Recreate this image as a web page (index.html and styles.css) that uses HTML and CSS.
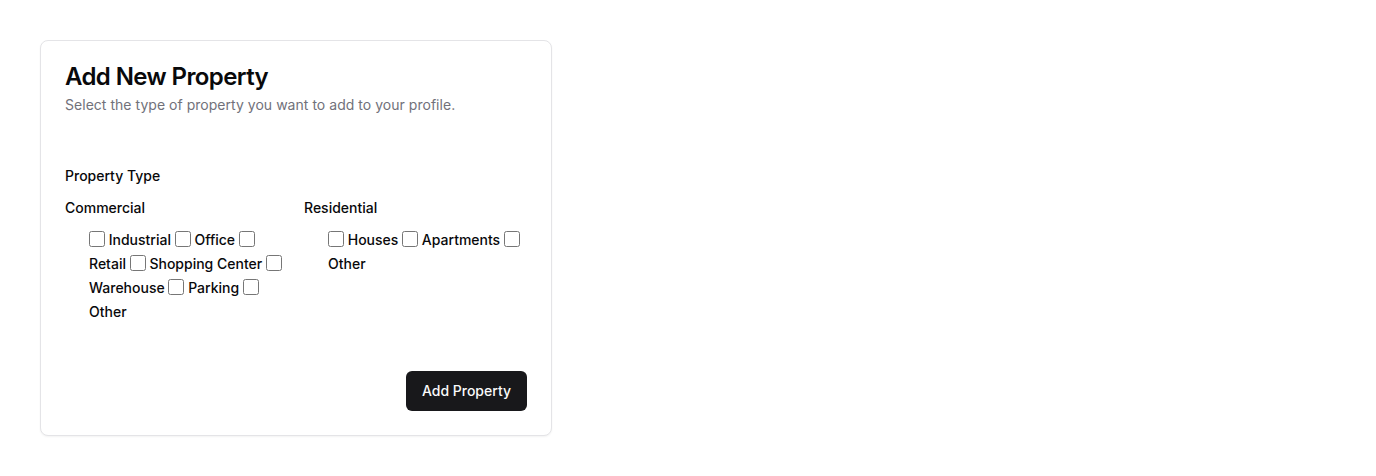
FILE: index.html
```html
<!DOCTYPE html>
<html>
<head>
<meta charset="utf-8">
<link rel="stylesheet" href="styles.css">
</head>
<body>
<div class="page">
  <div class="card">
    <div class="card-header">
      <h3 class="card-title">Add New Property</h3>
      <p class="card-desc">Select the type of property you want to add to your profile.</p>
    </div>
    <div class="card-content">
      <div class="field-label">Property Type</div>
      <div class="cols">
        <div class="col">
          <div class="group-label">Commercial</div>
          <div class="checks"><input type="checkbox"> Industrial <input type="checkbox"> Office <input type="checkbox"> Retail <input type="checkbox"> Shopping Center <input type="checkbox"> Warehouse <input type="checkbox"> Parking <input type="checkbox"> Other</div>
        </div>
        <div class="col">
          <div class="group-label">Residential</div>
          <div class="checks"><input type="checkbox"> Houses <input type="checkbox"> Apartments <input type="checkbox"> Other</div>
        </div>
      </div>
    </div>
    <div class="card-footer">
      <button class="btn">Add Property</button>
    </div>
  </div>
</div>
</body>
</html>
```

FILE: styles.css
```css
* { box-sizing: border-box; }
html, body { margin: 0; padding: 0; background: #fff; }
body {
  font-family: Inter, "Liberation Sans", sans-serif;
  color: #09090b;
}
.page { padding: 40px; }
.card {
  width: 512px;
  border: 1px solid #e4e4e7;
  border-radius: 8px;
  background: #fff;
  box-shadow: 0 1px 2px rgba(0,0,0,0.05);
}
.card-header {
  padding: 24px;
  display: flex;
  flex-direction: column;
  gap: 6px;
}
.card-title {
  margin: 0;
  font-size: 24px;
  line-height: 24px;
  font-weight: 600;
  letter-spacing: -0.6px;
}
.card-desc {
  margin: 0;
  font-size: 14px;
  line-height: 20px;
  color: #71717a;
  letter-spacing: 0.03px;
}
.card-content {
  padding: 27px 24px 47px;
}
.field-label {
  font-size: 14px;
  line-height: 20px;
  font-weight: 500;
  margin-bottom: 12px;
}
.cols {
  display: grid;
  grid-template-columns: 1fr 1fr;
  gap: 16px;
}
.group-label {
  font-size: 14px;
  line-height: 20px;
  font-weight: 500;
  margin-bottom: 10px;
}
.checks {
  padding-left: 24px;
  font-size: 14px;
  line-height: 24px;
  font-weight: 500;
}
.checks input {
  margin: 0;
  width: 16px;
  height: 16px;
  vertical-align: -2px;
}
.card-footer {
  padding: 0 24px 24px;
  display: flex;
  justify-content: flex-end;
}
.btn {
  height: 40px;
  padding: 0 16px 1px;
  border: 0;
  border-radius: 6px;
  background: #18181b;
  color: #fafafa;
  font-family: inherit;
  font-size: 14px;
  font-weight: 500;
}
```
